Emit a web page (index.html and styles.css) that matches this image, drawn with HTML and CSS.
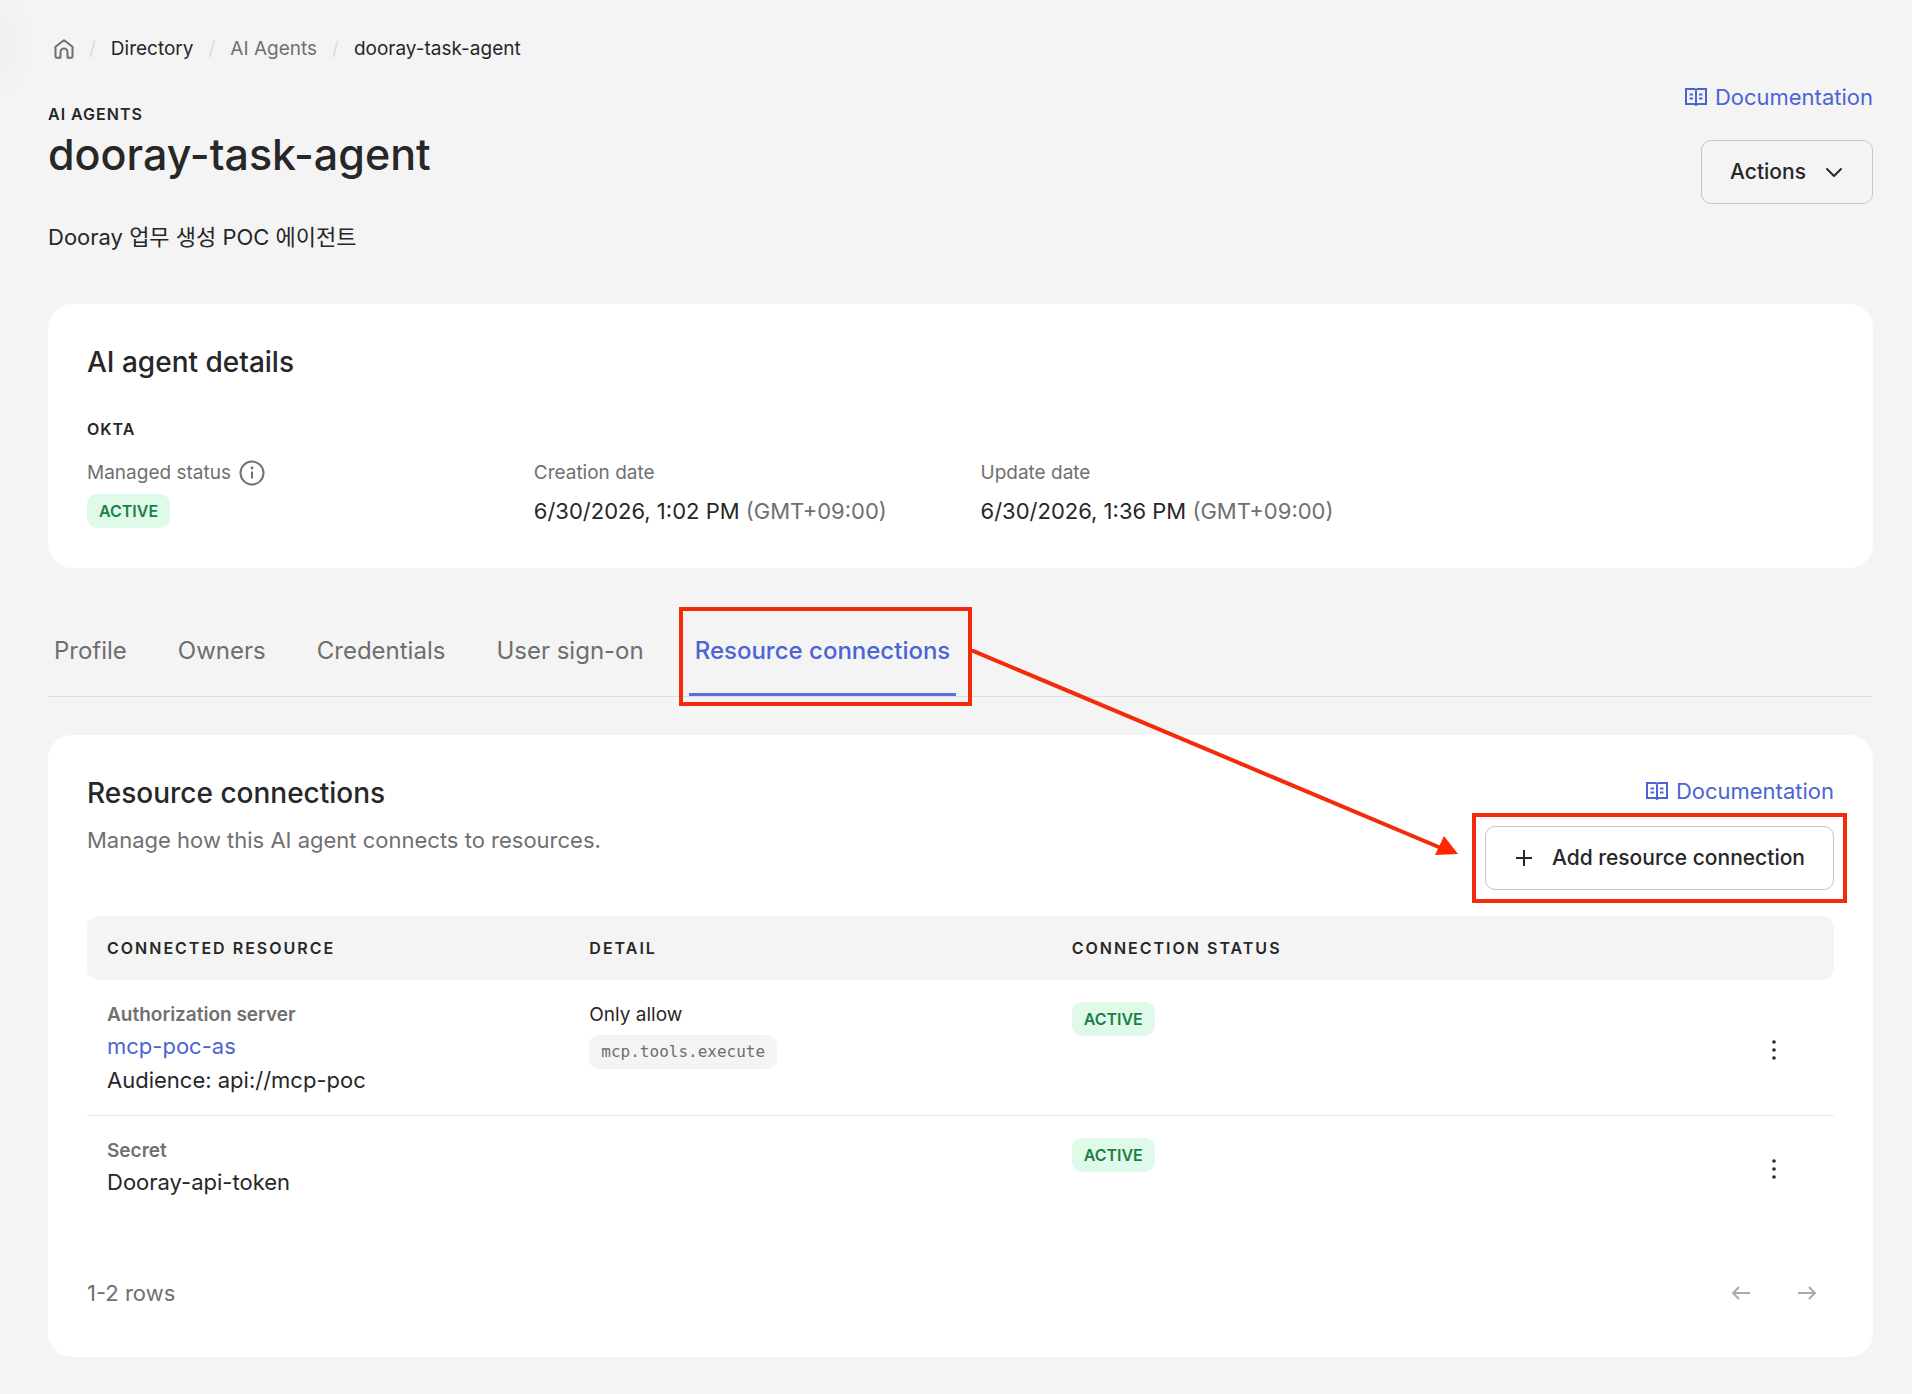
FILE: index.html
```html
<!DOCTYPE html>
<html lang="en">
<head>
    <meta charset="UTF-8">
    <meta name="viewport" content="width=device-width, initial-scale=1.0">
    <title>dooray-task-agent</title>
    <link rel="stylesheet" href="styles.css">
</head>
<body>
    <main class="page">
        <nav class="breadcrumb" aria-label="Breadcrumb">
            <a href="#" class="home" aria-label="Home">
                <svg width="20" height="20" viewBox="0 0 20 20" fill="none" stroke="currentColor" stroke-width="2" stroke-linejoin="round">
                    <path d="M1.5 7.8 10 1.2l8.500 6.600V17.500a1.300 1.300 0 0 1-1.300 1.300H13.500V13a3.500 3.500 0 0 0-7 0v5.800H2.800a1.300 1.300 0 0 1-1.300-1.300z"/>
                </svg>
            </a>
            <span class="slash">/</span>
            <a href="#">Directory</a>
            <span class="slash">/</span>
            <a href="#" class="muted">AI Agents</a>
            <span class="slash">/</span>
            <span>dooray-task-agent</span>
        </nav>

        <header class="page-header">
            <div>
                <div class="overline">AI AGENTS</div>
                <h1>dooray-task-agent</h1>
                <p class="description">Dooray 업무 생성 POC 에이전트</p>
            </div>
            <div class="side">
                <a href="#" class="doc-link">
                    <svg width="22" height="20" viewBox="0 0 22 20" fill="none" stroke="currentColor" stroke-width="2">
                        <path d="M1 2h8.500L11 3l1.500-1H21v15h-8.500L11 18l-1.500-1H1zM11 3v16M4.500 7.500h3.500M4.500 11.500h3.500M14 7.500h3.500M14 11.500h3.500"/>
                    </svg>
                    Documentation
                </a>
                <button type="button" class="btn">
                    Actions
                    <svg width="20" height="20" viewBox="0 0 20 20" fill="none" stroke="currentColor" stroke-width="2" stroke-linecap="round" stroke-linejoin="round">
                        <path d="M3 7l7 7 7-7"/>
                    </svg>
                </button>
            </div>
        </header>

        <section class="card">
            <h2>AI agent details</h2>
            <div class="overline okta">OKTA</div>
            <dl class="details">
                <div>
                    <dt>Managed status
                        <svg width="26" height="26" viewBox="0 0 26 26" fill="none" stroke="currentColor" stroke-width="2">
                            <circle cx="13" cy="13" r="11.500"/>
                            <path d="M13 11.500v7"/>
                            <circle cx="13" cy="8" r="1.400" fill="currentColor" stroke="none"/>
                        </svg>
                    </dt>
                    <dd><span class="badge">ACTIVE</span></dd>
                </div>
                <div>
                    <dt>Creation date</dt>
                    <dd>6/30/2026, 1:02 PM <span class="muted">(GMT+09:00)</span></dd>
                </div>
                <div>
                    <dt>Update date</dt>
                    <dd>6/30/2026, 1:36 PM <span class="muted">(GMT+09:00)</span></dd>
                </div>
            </dl>
        </section>

        <div class="tabs" role="tablist">
            <button type="button" role="tab">Profile</button>
            <button type="button" role="tab">Owners</button>
            <button type="button" role="tab">Credentials</button>
            <button type="button" role="tab">User sign-on</button>
            <div class="callout callout-tab">
                <button type="button" role="tab" class="active" aria-selected="true">Resource connections</button>
                <svg class="arrow" width="490" height="212" viewBox="0 0 490 212">
                    <path d="M0 1l470 198" stroke="#f22c0a" stroke-width="4"/>
                    <path d="M473 187l14 18-23 1z" fill="#ff2600"/>
                </svg>
            </div>
        </div>

        <section class="card">
            <div class="section-header">
                <div>
                    <h2>Resource connections</h2>
                    <p class="muted">Manage how this AI agent connects to resources.</p>
                </div>
                <div class="side">
                    <a href="#" class="doc-link">
                        <svg width="22" height="20" viewBox="0 0 22 20" fill="none" stroke="currentColor" stroke-width="2">
                            <path d="M1 2h8.500L11 3l1.500-1H21v15h-8.500L11 18l-1.500-1H1zM11 3v16M4.500 7.500h3.500M4.500 11.500h3.500M14 7.500h3.500M14 11.500h3.500"/>
                        </svg>
                        Documentation
                    </a>
                    <div class="callout callout-add">
                        <button type="button" class="btn">
                            <svg width="20" height="20" viewBox="0 0 20 20" fill="none" stroke="currentColor" stroke-width="2">
                                <path d="M10 2v16M2 10h16"/>
                            </svg>
                            Add resource connection
                        </button>
                    </div>
                </div>
            </div>

            <table>
                <thead>
                    <tr>
                        <th>CONNECTED RESOURCE</th>
                        <th>DETAIL</th>
                        <th>CONNECTION STATUS</th>
                        <th class="menu-cell"></th>
                    </tr>
                </thead>
                <tbody>
                    <tr>
                        <td>
                            <div class="kind">Authorization server</div>
                            <div><a href="#" class="link">mcp-poc-as</a></div>
                            <div>Audience: api://mcp-poc</div>
                        </td>
                        <td>
                            <div class="small">Only allow</div>
                            <code>mcp.tools.execute</code>
                        </td>
                        <td><span class="badge">ACTIVE</span></td>
                        <td class="menu-cell">
                            <button type="button" class="icon-btn" aria-label="More actions">
                                <svg width="24" height="24" viewBox="0 0 24 24" fill="currentColor">
                                    <circle cx="12" cy="4" r="1.800"/><circle cx="12" cy="12" r="1.800"/><circle cx="12" cy="20" r="1.800"/>
                                </svg>
                            </button>
                        </td>
                    </tr>
                    <tr>
                        <td>
                            <div class="kind">Secret</div>
                            <div>Dooray-api-token</div>
                        </td>
                        <td></td>
                        <td><span class="badge">ACTIVE</span></td>
                        <td class="menu-cell">
                            <button type="button" class="icon-btn" aria-label="More actions">
                                <svg width="24" height="24" viewBox="0 0 24 24" fill="currentColor">
                                    <circle cx="12" cy="4" r="1.800"/><circle cx="12" cy="12" r="1.800"/><circle cx="12" cy="20" r="1.800"/>
                                </svg>
                            </button>
                        </td>
                    </tr>
                </tbody>
            </table>

            <footer class="pagination">
                <span>1-2 rows</span>
                <div class="pager">
                    <button type="button" class="icon-btn" aria-label="Previous page" disabled>
                        <svg width="20" height="20" viewBox="0 0 20 20" fill="none" stroke="currentColor" stroke-width="2" stroke-linejoin="round">
                            <path d="M19 10H2M8 4l-6 6 6 6"/>
                        </svg>
                    </button>
                    <button type="button" class="icon-btn" aria-label="Next page" disabled>
                        <svg width="20" height="20" viewBox="0 0 20 20" fill="none" stroke="currentColor" stroke-width="2" stroke-linejoin="round">
                            <path d="M1 10h17M12 4l6 6-6 6"/>
                        </svg>
                    </button>
                </div>
            </footer>
        </section>
    </main>
</body>
</html>
```

FILE: styles.css
```css
* {
    box-sizing: border-box;
}
body {
    margin: 0;
    font-family: Inter, "Noto Sans CJK KR", sans-serif;
    font-size: 22px;
    line-height: 32px;
    color: #272727;
    background: #f4f4f4 radial-gradient(ellipse 34px 60px at 0 44px, #efefef, #f4f4f4) no-repeat;
}
h1, h2, p, dl, dd {
    margin: 0;
}
h1 {
    font-size: 43px;
    font-weight: 500;
    line-height: 56px;
}
h2 {
    font-size: 28px;
    font-weight: 500;
    line-height: 36px;
}
a {
    color: inherit;
    text-decoration: none;
}
button {
    font: inherit;
    color: inherit;
    background: none;
    border: none;
    padding: 0;
    cursor: pointer;
}
svg {
    display: block;
    flex-shrink: 0;
}
.page {
    padding: 35px 39px 32px 48px;
}
.muted {
    color: #707070;
}
.link, .doc-link {
    color: #4c64d4;
}

/* Breadcrumb */
.breadcrumb {
    display: flex;
    align-items: center;
    gap: 15px;
    padding-left: 6px;
    font-size: 19px;
    line-height: 28px;
}
.home {
    color: #6e6e6e;
}
.slash {
    color: #dcdcdc;
}

/* Header */
.page-header {
    display: flex;
    justify-content: space-between;
    margin: 18px 0 51px;
}
.page-header > div:first-child {
    padding-top: 21px;
}
.overline {
    font-size: 16px;
    font-weight: 600;
    line-height: 24px;
    letter-spacing: 1px;
}
.description {
    margin-top: 39px;
}
.side {
    display: flex;
    flex-direction: column;
    align-items: flex-end;
    gap: 19px;
}
.page-header .side {
    gap: 27px;
}
.doc-link {
    display: flex;
    align-items: center;
    gap: 8px;
}
.btn {
    display: flex;
    align-items: center;
    gap: 18px;
    height: 64px;
    padding: 0 28px;
    border: 1px solid #c6c6c6;
    border-radius: 10px;
    font-size: 21px;
    font-weight: 500;
}

/* Cards */
.card {
    padding: 40px 39px;
    background: #fff;
    border-radius: 24px;
}
.okta {
    margin: 37px 0 18px;
}
.details {
    display: grid;
    grid-template-columns: repeat(4, 1fr);
    gap: 40px;
}
.details dt {
    display: flex;
    align-items: center;
    gap: 8px;
    font-size: 19px;
    line-height: 28px;
    color: #707070;
}
.details dd {
    margin-top: 7px;
    line-height: 34px;
}
.badge {
    display: block;
    width: fit-content;
    padding: 0 12px;
    font-size: 16px;
    font-weight: 600;
    line-height: 34px;
    color: #1d7f48;
    background: #dffae8;
    border-radius: 10px;
}

/* Tabs */
.tabs {
    display: flex;
    gap: 39px;
    margin: 65px 0 38px;
    border-bottom: 1px solid #dedede;
}
.tabs button {
    padding: 0 6px 24px;
    font-size: 24px;
    line-height: 36px;
    color: #6e6e6e;
    border-bottom: 3px solid transparent;
}
.tabs .active {
    font-weight: 500;
    color: #4c64d4;
    border-bottom-color: #5a6fdc;
}

/* Red markers drawn over the page */
.callout {
    position: relative;
}
.callout::after {
    content: "";
    position: absolute;
    border: 4px solid #f22c0a;
    pointer-events: none;
}
.callout-tab::after {
    inset: -26px -16px -10px -10px;
}
.callout-add::after {
    inset: -13px;
}
.arrow {
    position: absolute;
    left: calc(100% + 15px);
    top: 16px;
    z-index: 1;
    pointer-events: none;
}

/* Resource connections */
.section-header {
    display: flex;
    justify-content: space-between;
    margin-bottom: 26px;
}
.section-header p {
    margin-top: 13px;
}
table {
    width: 100%;
    table-layout: fixed;
    border-collapse: separate;
    border-spacing: 0;
}
th {
    height: 64px;
    padding: 0 20px;
    font-size: 16px;
    font-weight: 600;
    letter-spacing: 2px;
    line-height: 24px;
    text-align: left;
    background: #f4f4f4;
}
th:first-child {
    border-radius: 12px 0 0 12px;
}
th:last-child {
    border-radius: 0 12px 12px 0;
}
td {
    padding: 21px 20px 18px;
    line-height: 34px;
    vertical-align: top;
}
tbody tr:first-child td {
    border-bottom: 1px solid #ebebeb;
}
td .badge {
    margin-top: 1px;
}
th.menu-cell {
    width: 300px;
}
td.menu-cell {
    padding: 4px 40px 0;
    vertical-align: middle;
}
.kind, .small {
    font-size: 19px;
    line-height: 28px;
}
.kind {
    font-weight: 600;
    color: #707070;
}
code {
    display: block;
    width: fit-content;
    margin-top: 6px;
    padding: 0 12px;
    font-family: "DejaVu Sans Mono", monospace;
    font-size: 16px;
    line-height: 34px;
    color: #6e6e6e;
    background: #f4f4f4;
    border-radius: 10px;
}
.icon-btn {
    display: flex;
    align-items: center;
    justify-content: center;
    width: 40px;
    height: 48px;
    margin-left: auto;
}
.pagination {
    display: flex;
    align-items: center;
    justify-content: space-between;
    margin-top: 52px;
    color: #707070;
}
.pager {
    display: flex;
    gap: 26px;
    padding-right: 7px;
    color: #aaa;
}
```
